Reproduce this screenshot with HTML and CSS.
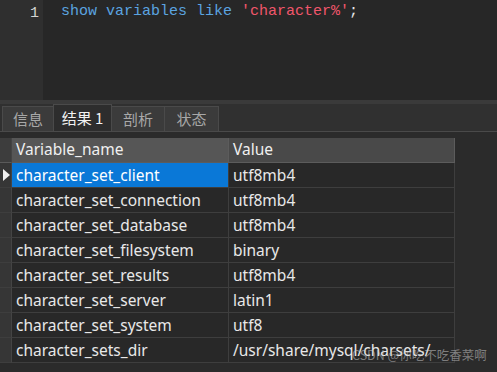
FILE: index.html
```html
<!DOCTYPE html>
<html>
<head>
<meta charset="utf-8">
<link rel="stylesheet" href="styles.css">
</head>
<body>
<div class="app">
  <div class="editor">
    <div class="gutter"><span class="ln">1</span></div>
    <div class="code"><span class="kw">show variables like</span> <span class="str">'character%'</span><span class="punc">;</span></div>
  </div>
  <div class="splitter"></div>
  <div class="tabbar">
    <div class="tab t-info">信息</div>
    <div class="tab active t-res">结果 1</div>
    <div class="tab t-prof">剖析</div>
    <div class="tab t-stat">状态</div>
  </div>
  <div class="tabline"></div>
  <div class="results">
    <div class="grid">
      <div class="ind head"></div><div class="cell head sorted">Variable_name</div><div class="cell head">Value</div>
      <div class="ind"><span class="tri"></span></div><div class="cell sel">character_set_client</div><div class="cell">utf8mb4</div>
      <div class="ind"></div><div class="cell">character_set_connection</div><div class="cell">utf8mb4</div>
      <div class="ind"></div><div class="cell">character_set_database</div><div class="cell">utf8mb4</div>
      <div class="ind"></div><div class="cell">character_set_filesystem</div><div class="cell">binary</div>
      <div class="ind"></div><div class="cell">character_set_results</div><div class="cell">utf8mb4</div>
      <div class="ind"></div><div class="cell">character_set_server</div><div class="cell">latin1</div>
      <div class="ind"></div><div class="cell">character_set_system</div><div class="cell">utf8</div>
      <div class="ind"></div><div class="cell">character_sets_dir</div><div class="cell">/usr/share/mysql/charsets/</div>
    </div>
    <div class="watermark">CSDN @你吃不吃香菜啊</div>
  </div>
</div>
</body>
</html>
```

FILE: styles.css
```css
html, body {
  margin: 0;
  padding: 0;
  background: #2b2b2b;
}
.app {
  width: 497px;
  height: 372px;
  overflow: hidden;
  display: flex;
  flex-direction: column;
  font-family: "Noto Sans", "Noto Sans CJK SC", sans-serif;
}
.editor {
  height: 100px;
  display: flex;
  background: #272727;
}
.gutter {
  width: 43px;
  background: #2f2f2f;
  box-sizing: border-box;
  padding-right: 4px;
  text-align: right;
}
.ln, .code {
  font-family: "Liberation Mono", monospace;
  font-size: 15px;
  line-height: 23px;
}
.ln {
  color: #d4d4d4;
}
.code {
  padding-left: 18px;
  white-space: pre;
}
.kw { color: #5ba4e0; }
.str { color: #f0566b; }
.punc { color: #e8e8e8; }
.splitter {
  height: 4px;
  background: #3a3a3a;
}
.tabbar {
  height: 27px;
  background: #303030;
  display: flex;
  align-items: flex-end;
  padding-left: 2px;
}
.tab {
  height: 25px;
  box-sizing: border-box;
  text-align: center;
  background: #3b3b3b;
  border: 1px solid #4a4a4a;
  border-bottom: none;
  color: #a8a8a8;
  font-size: 15px;
  line-height: 24px;
  font-family: "Noto Sans CJK SC", sans-serif;
}
.t-info { width: 52px; }
.t-res { width: 59px; }
.t-prof { width: 54px; }
.t-stat { width: 55px; }
.tab + .tab { margin-left: -1px; }
.tab.active {
  height: 27px;
  background: #2d2d2d;
  color: #f2f2f2;
  line-height: 26px;
  position: relative;
  z-index: 1;
}
.tabline {
  height: 1px;
  background: #4a4a4a;
}
.results {
  flex: 1;
  position: relative;
  background: #2b2b2b;
  padding-top: 6px;
}
.grid {
  display: grid;
  grid-template-columns: 12px 217px 226px;
  grid-auto-rows: 25px;
}
.ind, .cell {
  box-sizing: border-box;
  border-right: 1px solid #3e3e3e;
  border-bottom: 1px solid #3e3e3e;
}
.ind {
  background: #363636;
  border-right-color: #444;
  position: relative;
}
.ind.head { background: #3d3d3d; border-bottom-color: #5a5a5a; }
.cell {
  padding-left: 4px;
  color: #e8e8e8;
  font-size: 15.5px;
  line-height: 24px;
  white-space: nowrap;
  background: #282828;
}
.cell.head {
  background: #494949;
  color: #f0f0f0;
  border-right-color: #5c5c5c;
  border-bottom-color: #5c5c5c;
  line-height: 23px;
}
.cell.head.sorted { background: #565656; }
.cell.sel {
  background: #0a78d7;
  color: #ffffff;
}
.tri {
  position: absolute;
  left: 3px;
  top: 6px;
  width: 0;
  height: 0;
  border-top: 6px solid transparent;
  border-bottom: 6px solid transparent;
  border-left: 7px solid #f0f0f0;
}
.watermark {
  position: absolute;
  left: 352px;
  top: 213px;
  font-size: 12.5px;
  color: rgba(200, 200, 200, 0.55);
  font-family: "Noto Sans CJK SC", sans-serif;
  white-space: nowrap;
}
```
